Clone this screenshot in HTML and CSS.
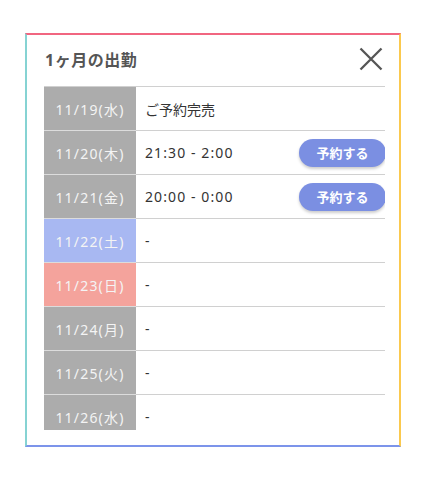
FILE: index.html
```html
<!DOCTYPE html>
<html lang="ja">
<head>
    <meta charset="UTF-8">
    <meta name="viewport" content="width=device-width, initial-scale=1.0">
    <title>1ヶ月の出勤</title>
    <link rel="stylesheet" href="styles.css">
</head>
<body>
    <div class="modal">
        <div class="modal-head">
            <h2>1ヶ月の出勤</h2>
            <button class="close-btn" aria-label="close">
                <svg width="24" height="24" viewBox="0 0 24 24">
                    <path d="M1.5 1.5 L22.5 22.5 M22.5 1.5 L1.5 22.5" stroke="#555" stroke-width="2.3" fill="none"/>
                </svg>
            </button>
        </div>
        <div class="modal-body">
            <table class="shift-table">
                <tr><th>11/19(水)</th><td>ご予約完売</td></tr>
                <tr><th>11/20(木)</th><td><div class="cell-row"><span class="time">21:30 - 2:00</span><button class="reserve-btn">予約する</button></div></td></tr>
                <tr><th>11/21(金)</th><td><div class="cell-row"><span class="time">20:00 - 0:00</span><button class="reserve-btn">予約する</button></div></td></tr>
                <tr><th class="sat">11/22(土)</th><td>-</td></tr>
                <tr><th class="sun">11/23(日)</th><td>-</td></tr>
                <tr><th>11/24(月)</th><td>-</td></tr>
                <tr><th>11/25(火)</th><td>-</td></tr>
                <tr><th>11/26(水)</th><td>-</td></tr>
            </table>
        </div>
    </div>
</body>
</html>
```

FILE: styles.css
```css
body{
  margin: 0;
  background-color: #fff;
  font-family: "Noto Sans", "Noto Sans CJK JP", sans-serif;
}

.modal{
  margin: 33px 0 0 25px;
  width: 376px;
  height: 414px;
  box-sizing: border-box;
  border-top: 2px solid #f16680;
  border-left: 2px solid #86d3d3;
  border-right: 2px solid #fbc94e;
  border-bottom: 2px solid #7c94ea;
  background-color: #fff;
  padding: 0 14px 15px 17px;
  display: flex;
  flex-direction: column;
}

.modal-head{
  height: 51px;
  display: flex;
  align-items: center;
  justify-content: space-between;
}

.modal-head h2{
  margin: 0 0 0 1px;
  font-size: 16px;
  letter-spacing: 0.5px;
  font-weight: bold;
  color: #555;
  position: relative;
  top: -2px;
}

.close-btn{
  border: none;
  background: none;
  padding: 0;
  width: 24px;
  height: 24px;
  margin-right: 2px;
  position: relative;
  top: -2px;
  cursor: pointer;
}

.modal-body{
  flex: 1;
  overflow: hidden;
}

.shift-table{
  width: 341px;
  border-collapse: collapse;
  border-top: 1px solid #d0d0d0;
}

.shift-table th, .shift-table td{
  height: 43px;
  padding: 0;
  border-bottom: 1px solid #d0d0d0;
  font-size: 14px;
}

.shift-table th{
  width: 92px;
  background-color: #acacac;
  color: #f4f4f4;
  font-weight: normal;
  text-align: center;
  letter-spacing: 1.2px;
  border-bottom-color: #dcdcdc;
}

.shift-table th.sat{
  background-color: #a8b8f2;
}

.shift-table th.sun{
  background-color: #f4a39c;
}

.shift-table td{
  color: #333;
  padding-left: 9px;
}

.time{
  letter-spacing: 1.1px;
}

.cell-row{
  display: flex;
  align-items: center;
  justify-content: space-between;
}

.reserve-btn{
  width: 87px;
  height: 28px;
  margin-right: -1px;
  border: none;
  border-radius: 14px;
  background-color: #7b8fe2;
  color: #fff;
  font-family: inherit;
  font-size: 13px;
  font-weight: bold;
  box-shadow: 0 2px 3px rgba(0,0,0,0.2);
  cursor: pointer;
}
```
